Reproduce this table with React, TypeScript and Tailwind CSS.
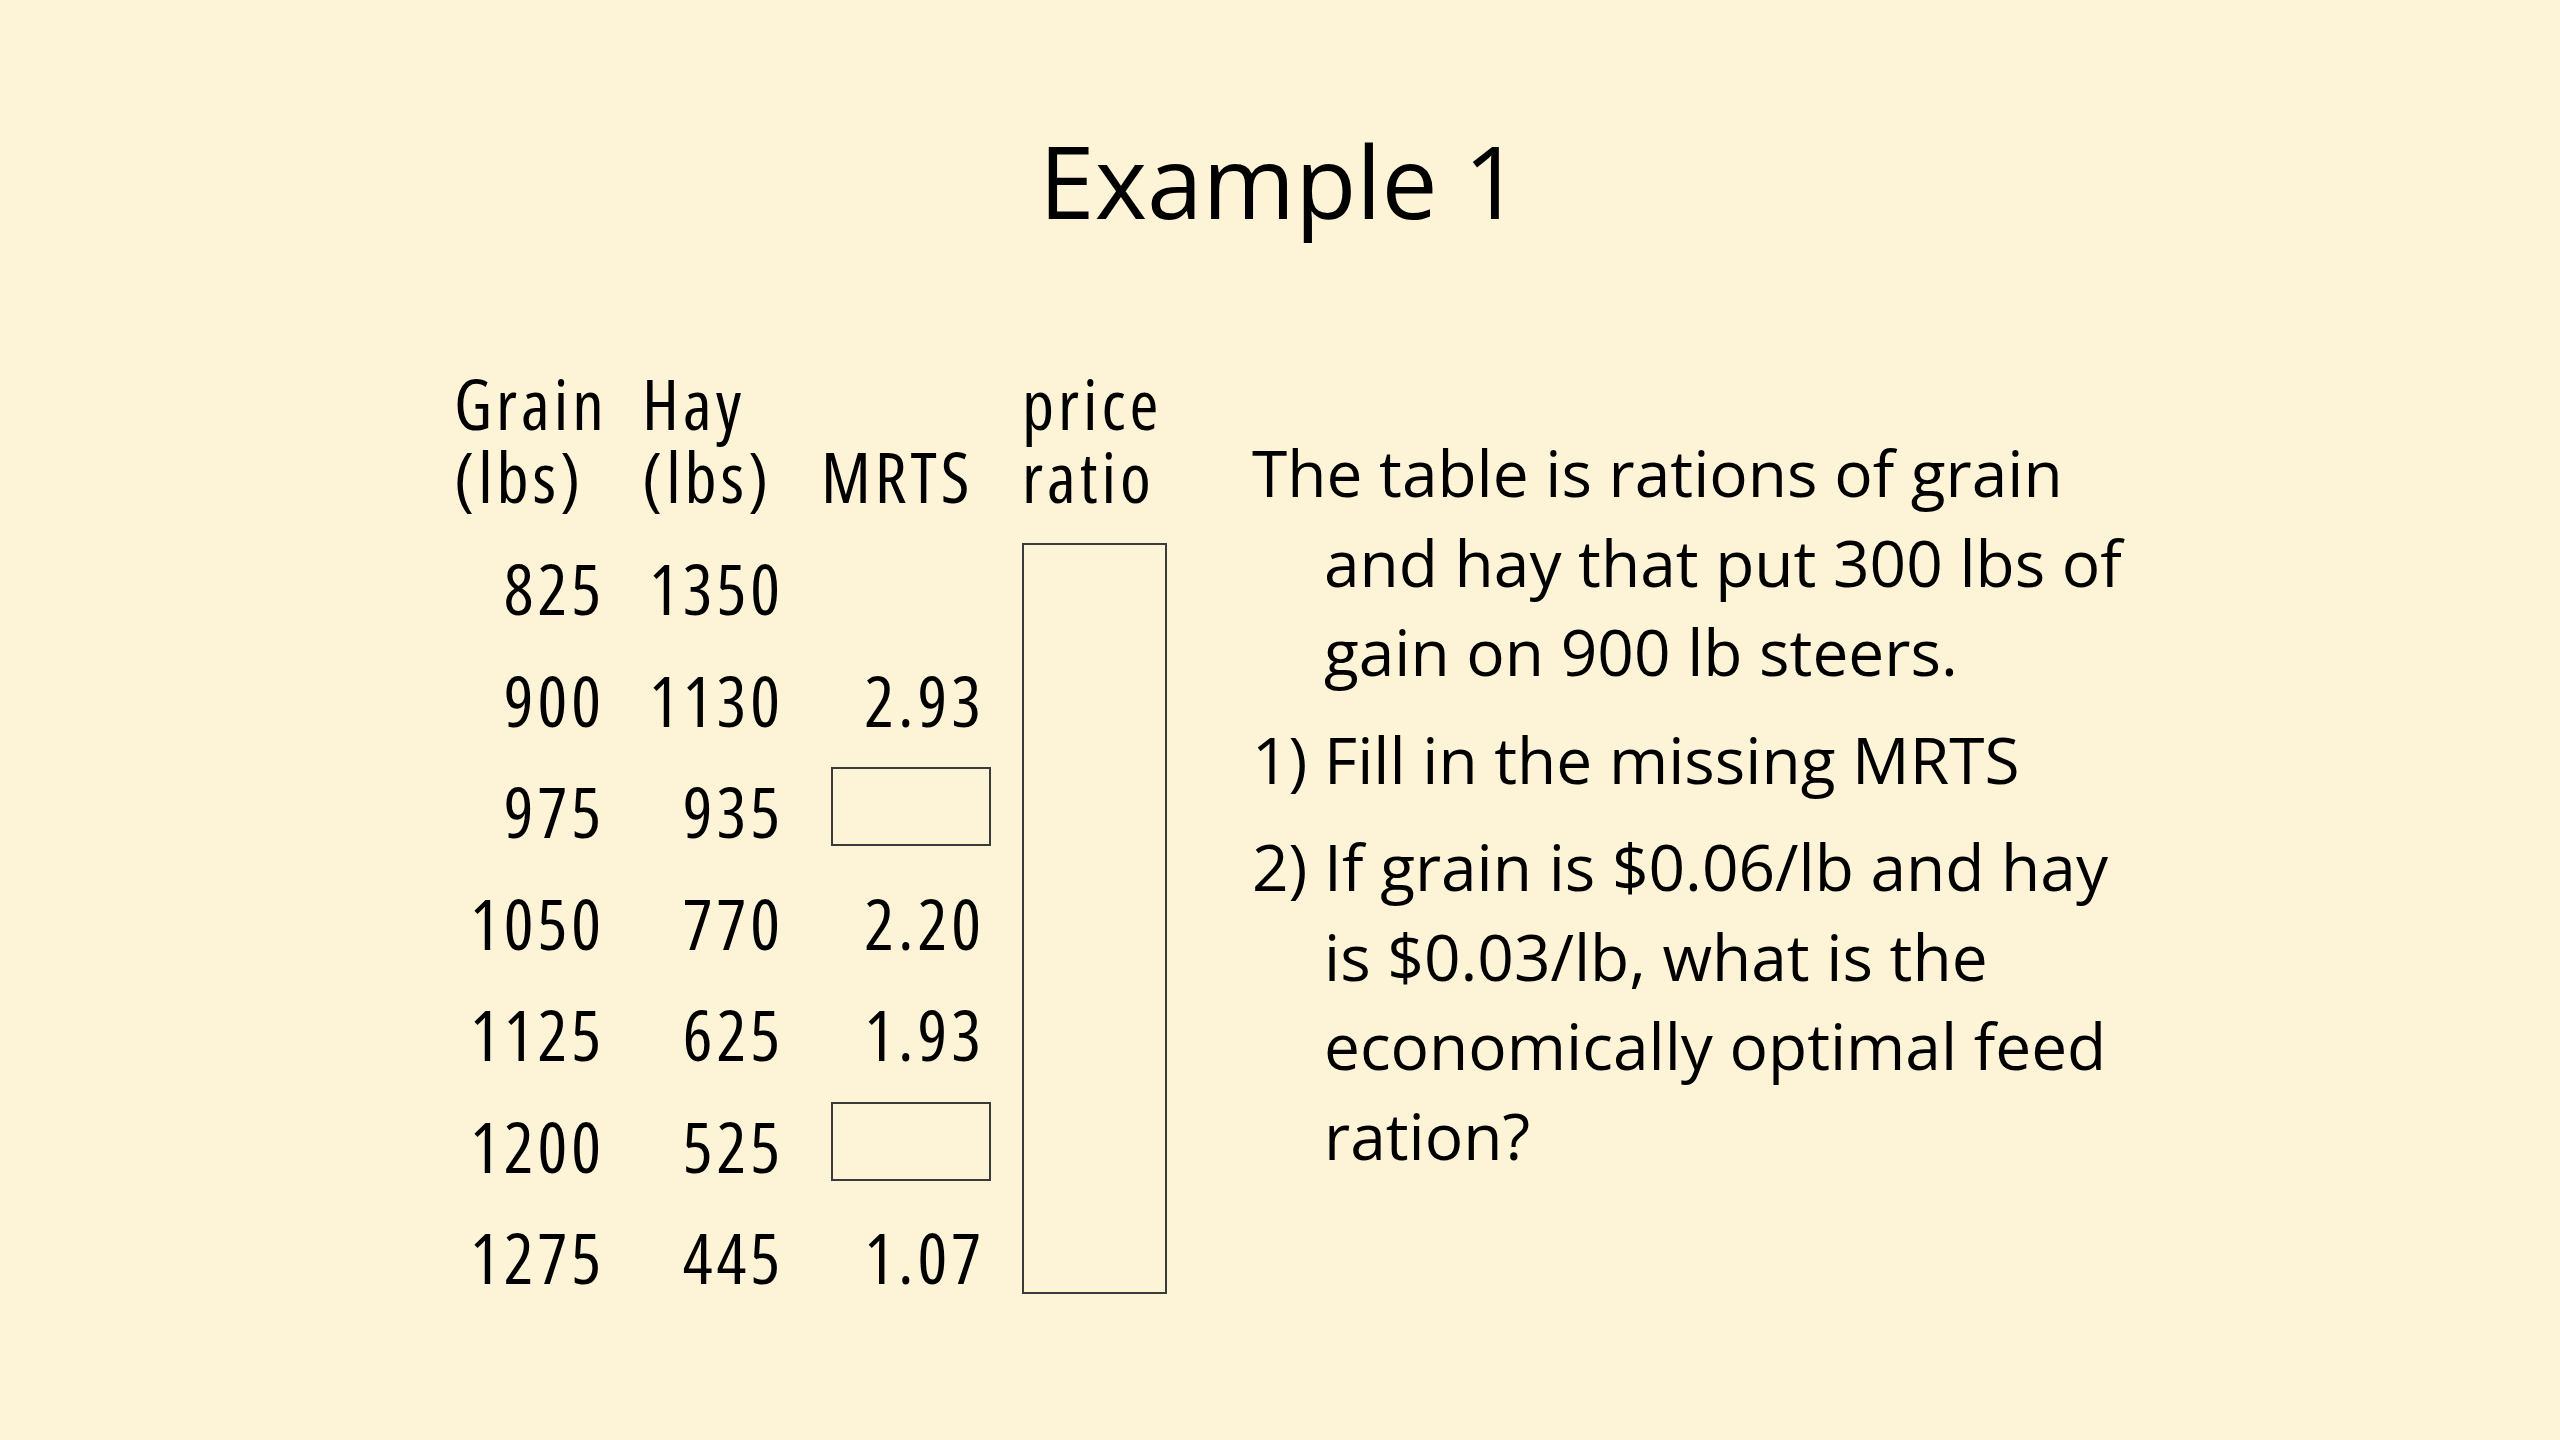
const rows: { grain: string; hay: string; mrts: string | null }[] = [
  { grain: '825', hay: '1350', mrts: '' },
  { grain: '900', hay: '1130', mrts: '2.93' },
  { grain: '975', hay: '935', mrts: null },
  { grain: '1050', hay: '770', mrts: '2.20' },
  { grain: '1125', hay: '625', mrts: '1.93' },
  { grain: '1200', hay: '525', mrts: null },
  { grain: '1275', hay: '445', mrts: '1.07' },
]

const Header = ({ top, bottom }: { top: string; bottom: string }) => (
  <div className="leading-[73px] whitespace-nowrap">
    {top}
    <br />
    {bottom}
  </div>
)

const FeedTable = () => (
  <div className="grid grid-cols-[147px_138px_160px_145px] grid-rows-[166px_repeat(7,111.5px)] gap-x-[41px] font-['Open_Sans',sans-serif] [font-stretch:75%] text-[70px] tracking-[4px] text-black">
    <Header top="Grain" bottom="(lbs)" />
    <Header top="Hay" bottom="(lbs)" />
    <Header top={'\u00a0'} bottom="MRTS" />
    <Header top="price" bottom="ratio" />

    {rows.map((r, i) => (
      <div key={i} className="contents">
        <div className="col-start-1 -mr-[4px] text-right leading-[111.5px]" style={{ gridRowStart: i + 2 }}>
          {r.grain}
        </div>
        <div className="col-start-2 -mr-[4px] text-right leading-[111.5px]" style={{ gridRowStart: i + 2 }}>
          {r.hay}
        </div>
        <div className="col-start-3 -mr-[4px] text-right leading-[111.5px]" style={{ gridRowStart: i + 2 }}>
          {r.mrts === null ? (
            <div className="ml-[10px] mt-[11px] h-[79px] w-[160px] border-2 border-[#3a3a3a]" />
          ) : (
            r.mrts
          )}
        </div>
      </div>
    ))}

    {/* price ratio column is left blank for the answer */}
    <div className="col-start-4 row-start-2 row-span-7">
      <div className="mt-[10px] h-[751px] w-[145px] border-2 border-[#3a3a3a]" />
    </div>
  </div>
)

export default function App() {
  return (
    <div className="min-h-screen w-full bg-[#fdf4d7] text-black">
      <h1 className="pt-[130px] text-center font-['Open_Sans',sans-serif] text-[100px] leading-none">Example 1</h1>

      <div className="mt-[137px] flex items-start pl-[454px]">
        <FeedTable />

        <div className="ml-[85px] mt-[61px] font-['Open_Sans',sans-serif] text-[64px] leading-[89.5px] whitespace-nowrap">
          <p className="pl-[72px] -indent-[72px]">
            The table is rations of grain
            <br />
            and hay that put 300 lbs of
            <br />
            gain on 900 lb steers.
          </p>
          <p className="mt-[18px] pl-[72px] -indent-[72px]">1) Fill in the missing MRTS</p>
          <p className="mt-[18px] pl-[72px] -indent-[72px]">
            2) If grain is $0.06/lb and hay
            <br />
            is $0.03/lb, what is the
            <br />
            economically optimal feed
            <br />
            ration?
          </p>
        </div>
      </div>
    </div>
  )
}
